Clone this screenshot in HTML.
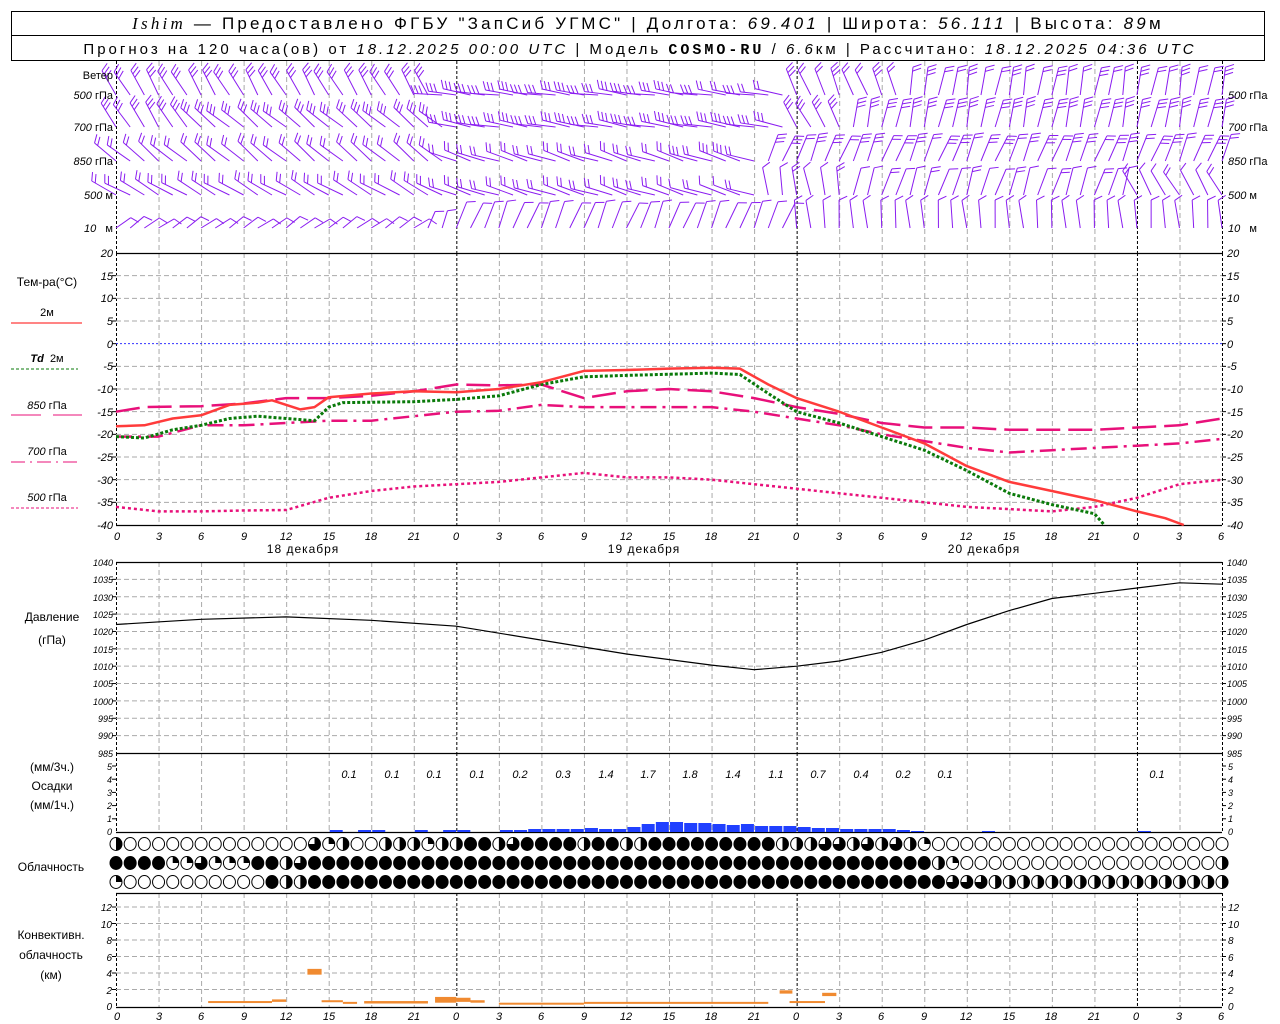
<!DOCTYPE html>
<html><head><meta charset="utf-8"><style>
html,body{margin:0;padding:0;background:#fff}
svg{display:block}
text{font-family:"Liberation Sans",sans-serif;font-size:11px;fill:#000}
.n{font-style:italic}
.r{text-anchor:end}
.m{text-anchor:middle}
</style></head><body>
<svg id="s" width="1280" height="1024" xmlns="http://www.w3.org/2000/svg">
<rect x="11.5" y="11.5" width="1253" height="49" fill="none" stroke="#000"/>
<line x1="11" y1="35.5" x2="1265" y2="35.5" stroke="#000"/>
<text x="648" y="29" class="m" style="font-size:17px;letter-spacing:3.2px"><tspan font-family="Liberation Serif" font-style="italic">Ishim</tspan> — Предоставлено ФГБУ "ЗапСиб УГМС" | Долгота: <tspan font-style="italic">69.401</tspan> | Широта: <tspan font-style="italic">56.111</tspan> | Высота: <tspan font-style="italic">89</tspan>м</text>
<text x="640" y="54" class="m" style="font-size:15px;letter-spacing:3px">Прогноз на 120 часа(ов) от <tspan font-style="italic">18.12.2025 00:00 UTC</tspan> | Модель <tspan font-family="Liberation Mono" font-weight="bold">COSMO-RU</tspan> / <tspan font-style="italic">6.6</tspan>км | Рассчитано: <tspan font-style="italic">18.12.2025 04:36 UTC</tspan></text>
<g id="grid"></g>
<g id="data"></g>
<g>
<text x="113" y="79" class="r">Ветер</text>
<text x="113" y="99" class="r"><tspan class="n">500</tspan> гПа</text>
<text x="113" y="131" class="r"><tspan class="n">700</tspan> гПа</text>
<text x="113" y="165" class="r"><tspan class="n">850</tspan> гПа</text>
<text x="113" y="199" class="r"><tspan class="n">500</tspan> м</text>
<text x="113" y="232" class="r"><tspan class="n">10</tspan> &#160; м</text>
<text x="1228" y="99"><tspan class="n">500</tspan> гПа</text>
<text x="1228" y="131"><tspan class="n">700</tspan> гПа</text>
<text x="1228" y="165"><tspan class="n">850</tspan> гПа</text>
<text x="1228" y="199"><tspan class="n">500</tspan> м</text>
<text x="1228" y="232"><tspan class="n">10</tspan> &#160; м</text>
<text x="47" y="286" class="m" style="font-size:12px">Тем-ра(°C)</text>
<text x="47" y="316" class="m">2м</text>
<text x="47" y="362" class="m"><tspan class="n" font-weight="bold">Td</tspan> &#160;2м</text>
<text x="47" y="409" class="m"><tspan class="n">850</tspan> гПа</text>
<text x="47" y="455" class="m"><tspan class="n">700</tspan> гПа</text>
<text x="47" y="501" class="m"><tspan class="n">500</tspan> гПа</text>
<line x1="11" y1="323" x2="82" y2="323" stroke="#ff3b3b" stroke-width="1.2"/>
<line x1="11" y1="369" x2="78" y2="369" stroke="#0a7a0a" stroke-dasharray="3,2"/>
<line x1="11" y1="415" x2="82" y2="415" stroke="#e8107a" stroke-dasharray="30,12"/>
<line x1="11" y1="462" x2="78" y2="462" stroke="#e8107a" stroke-dasharray="14,5,2,5"/>
<line x1="11" y1="508" x2="78" y2="508" stroke="#e8107a" stroke-dasharray="3,2"/>
<text x="52" y="621" class="m" style="font-size:12px">Давление</text>
<text x="52" y="644" class="m" style="font-size:12px">(гПа)</text>
<text x="52" y="771" class="m" style="font-size:12px">(мм/3ч.)</text>
<text x="52" y="790" class="m" style="font-size:12px">Осадки</text>
<text x="52" y="809" class="m" style="font-size:12px">(мм/1ч.)</text>
<text x="51" y="871" class="m" style="font-size:12px">Облачность</text>
<text x="51" y="939" class="m" style="font-size:12px">Конвективн.</text>
<text x="51" y="959" class="m" style="font-size:12px">облачность</text>
<text x="51" y="979" class="m" style="font-size:12px">(км)</text>
<text x="303" y="553" class="m" style="font-size:12px;letter-spacing:1px">18 декабря</text>
<text x="644" y="553" class="m" style="font-size:12px;letter-spacing:1px">19 декабря</text>
<text x="984" y="553" class="m" style="font-size:12px;letter-spacing:1px">20 декабря</text>
</g>
<g class="n" style="font-size:11px">
<text x="113" y="257" class="r">20</text><text x="113" y="280" class="r">15</text><text x="113" y="302" class="r">10</text><text x="113" y="325" class="r">5</text><text x="113" y="348" class="r">0</text><text x="113" y="370" class="r">-5</text><text x="113" y="393" class="r">-10</text><text x="113" y="416" class="r">-15</text><text x="113" y="438" class="r">-20</text><text x="113" y="461" class="r">-25</text><text x="113" y="484" class="r">-30</text><text x="113" y="506" class="r">-35</text><text x="113" y="529" class="r">-40</text>
<text x="1227" y="257">20</text><text x="1227" y="280">15</text><text x="1227" y="302">10</text><text x="1227" y="325">5</text><text x="1227" y="348">0</text><text x="1227" y="370">-5</text><text x="1227" y="393">-10</text><text x="1227" y="416">-15</text><text x="1227" y="438">-20</text><text x="1227" y="461">-25</text><text x="1227" y="484">-30</text><text x="1227" y="506">-35</text><text x="1227" y="529">-40</text>
<text x="113" y="566" class="r" style="font-size:9px">1040</text><text x="113" y="583" class="r" style="font-size:9px">1035</text><text x="113" y="601" class="r" style="font-size:9px">1030</text><text x="113" y="618" class="r" style="font-size:9px">1025</text><text x="113" y="635" class="r" style="font-size:9px">1020</text><text x="113" y="653" class="r" style="font-size:9px">1015</text><text x="113" y="670" class="r" style="font-size:9px">1010</text><text x="113" y="687" class="r" style="font-size:9px">1005</text><text x="113" y="705" class="r" style="font-size:9px">1000</text><text x="113" y="722" class="r" style="font-size:9px">995</text><text x="113" y="739" class="r" style="font-size:9px">990</text><text x="113" y="757" class="r" style="font-size:9px">985</text>
<text x="1227" y="566" style="font-size:9px">1040</text><text x="1227" y="583" style="font-size:9px">1035</text><text x="1227" y="601" style="font-size:9px">1030</text><text x="1227" y="618" style="font-size:9px">1025</text><text x="1227" y="635" style="font-size:9px">1020</text><text x="1227" y="653" style="font-size:9px">1015</text><text x="1227" y="670" style="font-size:9px">1010</text><text x="1227" y="687" style="font-size:9px">1005</text><text x="1227" y="705" style="font-size:9px">1000</text><text x="1227" y="722" style="font-size:9px">995</text><text x="1227" y="739" style="font-size:9px">990</text><text x="1227" y="757" style="font-size:9px">985</text>
<text x="112" y="770" class="r" style="font-size:9px">5</text><text x="112" y="783" class="r" style="font-size:9px">4</text><text x="112" y="796" class="r" style="font-size:9px">3</text><text x="112" y="809" class="r" style="font-size:9px">2</text><text x="112" y="822" class="r" style="font-size:9px">1</text><text x="112" y="835" class="r" style="font-size:9px">0</text>
<text x="1228" y="770" style="font-size:9px">5</text><text x="1228" y="783" style="font-size:9px">4</text><text x="1228" y="796" style="font-size:9px">3</text><text x="1228" y="809" style="font-size:9px">2</text><text x="1228" y="822" style="font-size:9px">1</text><text x="1228" y="835" style="font-size:9px">0</text>
<text x="112" y="911" class="r" style="font-size:10px">12</text><text x="112" y="928" class="r" style="font-size:10px">10</text><text x="112" y="944" class="r" style="font-size:10px">8</text><text x="112" y="961" class="r" style="font-size:10px">6</text><text x="112" y="977" class="r" style="font-size:10px">4</text><text x="112" y="994" class="r" style="font-size:10px">2</text><text x="112" y="1010" class="r" style="font-size:10px">0</text>
<text x="1228" y="911" style="font-size:10px">12</text><text x="1228" y="928" style="font-size:10px">10</text><text x="1228" y="944" style="font-size:10px">8</text><text x="1228" y="961" style="font-size:10px">6</text><text x="1228" y="977" style="font-size:10px">4</text><text x="1228" y="994" style="font-size:10px">2</text><text x="1228" y="1010" style="font-size:10px">0</text>
<g style="font-size:13px">
<text x="349" y="778" class="m">0.1</text><text x="392" y="778" class="m">0.1</text><text x="434" y="778" class="m">0.1</text><text x="477" y="778" class="m">0.1</text><text x="520" y="778" class="m">0.2</text><text x="563" y="778" class="m">0.3</text><text x="606" y="778" class="m">1.4</text><text x="648" y="778" class="m">1.7</text><text x="690" y="778" class="m">1.8</text><text x="733" y="778" class="m">1.4</text><text x="776" y="778" class="m">1.1</text><text x="818" y="778" class="m">0.7</text><text x="861" y="778" class="m">0.4</text><text x="903" y="778" class="m">0.2</text><text x="945" y="778" class="m">0.1</text><text x="1157" y="778" class="m">0.1</text>
</g>
<g style="font-size:14px">
<text x="117" y="540" class="m">0</text><text x="159" y="540" class="m">3</text><text x="201" y="540" class="m">6</text><text x="244" y="540" class="m">9</text><text x="286" y="540" class="m">12</text><text x="329" y="540" class="m">15</text><text x="371" y="540" class="m">18</text><text x="414" y="540" class="m">21</text><text x="456" y="540" class="m">0</text><text x="499" y="540" class="m">3</text><text x="541" y="540" class="m">6</text><text x="584" y="540" class="m">9</text><text x="626" y="540" class="m">12</text><text x="669" y="540" class="m">15</text><text x="711" y="540" class="m">18</text><text x="754" y="540" class="m">21</text><text x="796" y="540" class="m">0</text><text x="839" y="540" class="m">3</text><text x="881" y="540" class="m">6</text><text x="924" y="540" class="m">9</text><text x="966" y="540" class="m">12</text><text x="1009" y="540" class="m">15</text><text x="1051" y="540" class="m">18</text><text x="1094" y="540" class="m">21</text><text x="1136" y="540" class="m">0</text><text x="1179" y="540" class="m">3</text><text x="1221" y="540" class="m">6</text>
<text x="117" y="1020" class="m">0</text><text x="159" y="1020" class="m">3</text><text x="201" y="1020" class="m">6</text><text x="244" y="1020" class="m">9</text><text x="286" y="1020" class="m">12</text><text x="329" y="1020" class="m">15</text><text x="371" y="1020" class="m">18</text><text x="414" y="1020" class="m">21</text><text x="456" y="1020" class="m">0</text><text x="499" y="1020" class="m">3</text><text x="541" y="1020" class="m">6</text><text x="584" y="1020" class="m">9</text><text x="626" y="1020" class="m">12</text><text x="669" y="1020" class="m">15</text><text x="711" y="1020" class="m">18</text><text x="754" y="1020" class="m">21</text><text x="796" y="1020" class="m">0</text><text x="839" y="1020" class="m">3</text><text x="881" y="1020" class="m">6</text><text x="924" y="1020" class="m">9</text><text x="966" y="1020" class="m">12</text><text x="1009" y="1020" class="m">15</text><text x="1051" y="1020" class="m">18</text><text x="1094" y="1020" class="m">21</text><text x="1136" y="1020" class="m">0</text><text x="1179" y="1020" class="m">3</text><text x="1221" y="1020" class="m">6</text>
</g>
</g>
</svg>
<script>
var NS="http://www.w3.org/2000/svg",G=document.getElementById("grid"),D=document.getElementById("data");
function el(p,t,a){var e=document.createElementNS(NS,t);for(var k in a)e.setAttribute(k,a[k]);p.appendChild(e);return e}
function ln(p,x1,y1,x2,y2,c,w,da){var a={x1:x1,y1:y1,x2:x2,y2:y2,stroke:c,"stroke-width":w||1};if(da)a["stroke-dasharray"]=da;return el(p,"line",a)}
var X0=116,PH=14.18;function X(h){return X0+h*PH}
var L=116,R=1222;
var panels=[[61,253],[253,525],[562,753],[753,832],[893,1007]];
panels.forEach(function(p){
 for(var h=3;h<78;h+=3){if(h%24==0)ln(G,X(h)+.5,p[0],X(h)+.5,p[1],"#000",1,"3,2");else ln(G,X(h)+.5,p[0],X(h)+.5,p[1],"#aaa",1,"5,3")}
 ln(G,L+.5,p[0],L+.5,p[1],"#000",1,"3,2");ln(G,R+.5,p[0],R+.5,p[1],"#000",1,"3,2");
});
for(var i=1;i<12;i++){var y=253+i*272/12;ln(G,L,y,R,y,i==4?"#33f":"#aaa",1,i==4?"2,2":"5,3");ln(G,L-4,y,L,y,"#000");ln(G,R,y,R+4,y,"#000")}
for(var i=1;i<11;i++){var y=562+i*191/11;ln(G,L,y,R,y,"#aaa",1,"5,3");ln(G,L-4,y,L,y,"#000");ln(G,R,y,R+4,y,"#000")}
for(var i=1;i<6;i++){var y=832-i*13.2;ln(G,L-4,y,L,y,"#000");ln(G,R,y,R+4,y,"#000")}
for(var v=2;v<=12;v+=2){var y=1006-v*8.25;ln(G,L,y,R,y,"#aaa",1,"5,3");ln(G,L-4,y,L,y,"#000");ln(G,R,y,R+4,y,"#000")}
[253,525,562,753,832,893,1007].forEach(function(y){ln(G,L,y+.5,R,y+.5,"#000",1.2)});
function T(t){return 253+(20-t)*272/60}
function P(p){return 562+(1040-p)*191/55}
function curve(pts,f,c,w,da){var d="";pts.forEach(function(q,i){d+=(i?"L":"M")+X(q[0]).toFixed(1)+","+f(q[1]).toFixed(1)});var a={d:d,fill:"none",stroke:c,"stroke-width":w,"stroke-linejoin":"round"};if(da)a["stroke-dasharray"]=da;el(D,"path",a)}
function pr(a){var o=[];for(var i=0;i<a.length;i+=2)o.push([a[i],a[i+1]]);return o}
curve(pr([0,-36,3,-37,6,-37,9,-36.8,12,-36.7,15,-34,18,-32.5,21,-31.5,24,-31,27,-30.5,30,-29.5,33,-28.5,36,-29.5,39,-29.5,42,-30,45,-31,48,-32,51,-33,54,-34,57,-35,60,-36,63,-36.5,66,-37,69,-36,72,-34,75,-31,78,-30]),T,"#e8107a",2.5,"3,3");
curve(pr([0,-20.5,3,-20.5,6,-18,9,-18,12,-17.5,15,-17,18,-17,21,-16,24,-15,27,-14.8,30,-13.5,33,-14,36,-14,39,-14,42,-14,45,-15,48,-16.5,51,-18,54,-20,57,-21.5,60,-23,63,-24,66,-23.5,69,-23,72,-22.5,75,-22,78,-21]),T,"#e8107a",2.5,"16,6,3,6");
curve(pr([0,-15,2,-14,6,-13.8,9,-13.2,12,-12,15,-12,18,-11.5,21,-10.5,24,-9,27,-9.2,30,-9,33,-12,36,-10.5,39,-10,42,-10.5,45,-12,48,-14,51,-15.5,54,-17.5,57,-18.5,60,-18.5,63,-19,66,-19,69,-19,72,-18.5,75,-18,78,-16.5]),T,"#e8107a",2.5,"24,8");
curve(pr([0,-20.5,2,-20.8,4,-19,6,-18,8,-16.5,10,-16,12,-16.5,14,-17,15,-14,16,-13,21,-12.8,24,-12.3,27,-11.5,30,-9,33,-7.3,36,-7,42,-6.5,44,-6.8,46,-11,48,-15,51,-17.5,54,-20.5,57,-23.5,60,-28,63,-33,66,-35.5,69,-37.5,69.7,-40]),T,"#0a7a0a",3,"3,2");
curve(pr([0,-18.2,2,-18,4,-16.5,6,-15.8,8,-13.5,10,-13,11,-12.5,13,-14.5,14,-14,15,-11.8,18,-11,21,-10.5,24,-10.7,27,-10,30,-8.5,33,-6,36,-5.8,39,-5.5,42,-5.3,44,-5.5,46,-9,48,-12,51,-15,54,-18.5,57,-22,60,-27,63,-30.5,66,-32.5,69,-34.5,72,-37,74,-38.5,75.3,-40]),T,"#ff3b3b",2.5);
curve(pr([0,1022,6,1023.5,12,1024.2,18,1023.2,24,1021.5,30,1017.5,36,1013.5,42,1010.3,45,1009,48,1010,51,1011.5,54,1014,57,1017.5,60,1022,63,1026,66,1029.5,69,1031,72,1032.5,75,1034,78,1033.6]),P,"#000",1.2);
var pb={15:2,17:2,18:2,21:2,23:2,24:2,27:2,28:2,29:3,30:3,31:3,32:3,33:4,34:3,35:3,36:5,37:8,38:10,39:10,40:9,41:9,42:8,43:7,44:8,45:6,46:6,47:6,48:5,49:4,50:4,51:3,52:3,53:3,54:3,55:2,56:1,61:1,72:1};
for(var h in pb){el(D,"rect",{x:X(+h)+1,y:832-pb[h],width:13,height:pb[h],fill:"#2040ff"})}
function cb(h1,h2,v1,v2){el(D,"rect",{x:X(h1),y:1006-v2*8.25,width:X(h2)-X(h1),height:Math.max(2,(v2-v1)*8.25),fill:"#f08a30"})}
cb(6.5,11,0.4,0.6);cb(11,12,0.5,0.8);cb(13.5,14.5,3.8,4.5);cb(14.5,16,0.5,0.7);cb(16,17,0.3,0.5);cb(17.5,22,0.3,0.6);cb(22.5,24,0.4,1.1);cb(24,25,0.5,1.0);cb(25,26,0.4,0.7);cb(27,33,0.2,0.4);cb(33,46,0.3,0.5);cb(46.8,47.7,1.5,1.9);cb(47.5,50,0.4,0.6);cb(49.8,50.8,1.2,1.6);
var rows=[[844,"20000000000000312002221224423444424422444444444222332323210000000000000000000000"],[863,"44441131114423444444444444444444444444444444444444444444442100000000000000000024"],[882,"10000000000422444444444444444444444444444444444444444444444333222222222222222221"]];
rows.forEach(function(r){for(var h=0;h<=78;h++){var c=+r[1][h],cx=X(h),cy=r[0];
 el(D,"ellipse",{cx:cx,cy:cy,rx:6,ry:6.5,fill:c==4?"#000":"#fff",stroke:"#000","stroke-width":1});
 if(c==2)el(D,"path",{d:"M"+cx+","+(cy-6.5)+"A6,6.5 0 0 1 "+cx+","+(cy+6.5)+"Z",fill:"#000"});
 if(c==1)el(D,"path",{d:"M"+cx+","+cy+"L"+cx+","+(cy-6.5)+"A6,6.5 0 0 1 "+(cx+6)+","+cy+"Z",fill:"#000"});
 if(c==3)el(D,"path",{d:"M"+cx+","+cy+"L"+cx+","+(cy-6.5)+"A6,6.5 0 1 1 "+(cx-6)+","+cy+"Z",fill:"#000"});
}});
function seg(h,a){for(var i=0;i<a.length;i+=2)if(h<a[i])return a[i+1];return a[a.length-1]}
var lv=[[95,[23,120,48,172,56,112,79,80],[3,3,3,2]],[127,[6,122,24,140,48,170,52,118,79,78],[3,3,3,2,3]],[161,[24,140,46,162,79,68],[2,2,3]],[195,[24,150,46,162,52,100,72,72,79,120],[2,2,2,1,1]],[228,[22,35,48,68,79,95],[1,1,1]]];
var W=el(D,"g",{stroke:"#8a1cf0","stroke-width":1,fill:"none"});
lv.forEach(function(l){var y0=l[0];for(var h=0;h<=78;h++){
 var a=seg(h,l[1])+Math.sin(h*1.7)*5,r=a*Math.PI/180,len=(y0==228&&h<24)?18:28;
 var x0=X(h),ex=x0+Math.cos(r)*len,ey=y0-Math.sin(r)*len;ln(W,x0,y0,ex,ey,"#8a1cf0");
 var nf=(h%3==0?l[2][0]:(l[2].length>1&&h>40?l[2][l[2].length-1]:l[2][0]));
 var fr=(a-65)*Math.PI/180;
 for(var k=0;k<nf;k++){var px=ex-Math.cos(r)*k*4,py=ey+Math.sin(r)*k*4;ln(W,px,py,px+Math.cos(fr)*9,py-Math.sin(fr)*9,"#8a1cf0")}
}});
</script>
</body></html>
